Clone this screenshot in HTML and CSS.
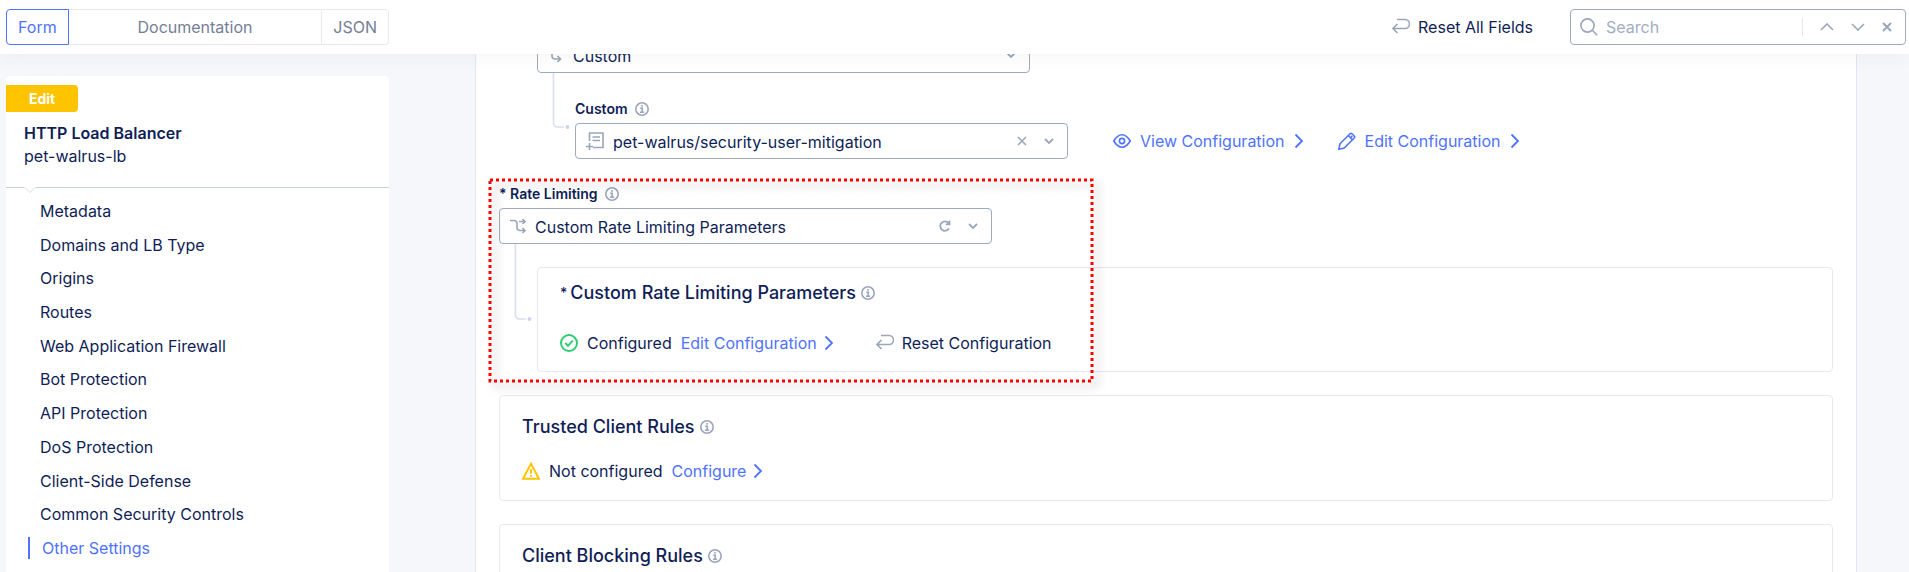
FILE: index.html
```html
<!DOCTYPE html>
<html lang="en">
<head>
<meta charset="utf-8">
<title>HTTP Load Balancer</title>
<link rel="stylesheet" href="styles.css">
</head>
<body>
<svg class="defs" aria-hidden="true">
  <symbol id="i-info" viewBox="0 0 14 14"><circle cx="7" cy="7" r="6.2"/><path d="M5.2 6.3H7.2V10M5 10.2H9.2M6.2 3.900H7.800"/></symbol>
  <symbol id="i-right" viewBox="0 0 10 16"><path d="M1.5 1.5 8 8 1.5 14.5"/></symbol>
  <symbol id="i-down" viewBox="0 0 10 6"><path d="M1 1 5 5 9 1"/></symbol>
  <symbol id="i-x" viewBox="0 0 10 10"><path d="M1 1 9 9M9 1 1 9"/></symbol>
  <symbol id="i-return" viewBox="0 0 18 18"><path d="M5 1.5H13A4.3 4.3 0 0 1 13 10.5H1.2M5.5 6 1 10.5 5.5 15"/></symbol>
</svg>

<header class="topbar">
  <div class="tabs">
    <button class="tab tab-active">Form</button>
    <button class="tab tab-wide">Documentation</button>
    <button class="tab">JSON</button>
  </div>
  <div class="tools">
    <button class="reset"><svg class="icon-18 muted"><use href="#i-return"/></svg>Reset All Fields</button>
    <div class="search">
      <svg class="icon-18 muted" viewBox="0 0 18 18"><circle cx="7.5" cy="7.5" r="6.6"/><path d="M12.3 12.3 17.2 17.2"/></svg>
      <input type="text" placeholder="Search" aria-label="Search">
      <span class="sep"></span>
      <button aria-label="Previous"><svg class="icon-arrow muted" viewBox="0 0 14 8"><path d="M1 7 7 1 13 7"/></svg></button>
      <button aria-label="Next"><svg class="icon-arrow muted" viewBox="0 0 14 8"><path d="M1 1 7 7 13 1"/></svg></button>
      <button aria-label="Clear"><svg class="icon-10 muted bold"><use href="#i-x"/></svg></button>
    </div>
  </div>
</header>

<div class="page">
  <aside class="sidebar">
    <div class="side-head">
      <span class="tag">Edit</span>
      <h1>HTTP Load Balancer</h1>
      <p>pet-walrus-lb</p>
      <svg class="notch" viewBox="0 0 12 7"><path class="notch-fill" d="M0 0 6 5.5 12 0Z"/><path class="notch-line" d="M1 .5 6 5.5 11 .5"/></svg>
    </div>
    <nav class="side-nav">
      <a href="#">Metadata</a>
      <a href="#">Domains and LB Type</a>
      <a href="#">Origins</a>
      <a href="#">Routes</a>
      <a href="#">Web Application Firewall</a>
      <a href="#">Bot Protection</a>
      <a href="#">API Protection</a>
      <a href="#">DoS Protection</a>
      <a href="#">Client-Side Defense</a>
      <a href="#">Common Security Controls</a>
      <a href="#" class="current">Other Settings</a>
    </nav>
  </aside>

  <main class="panel">
    <div class="branch indent">
      <div class="combo combo-scrolled">
        <svg class="icon-16 muted" viewBox="0 0 16 16"><path d="M4 2V9Q4 12 7 12H12M9.5 9 12.5 12 9.5 15"/></svg>
        <select aria-label="Mitigation type"><option>Custom</option></select>
        <svg class="icon-chev muted"><use href="#i-down"/></svg>
      </div>
      <div class="child">
        <svg class="elbow" viewBox="0 0 18 57"><path d="M1.5 0V50Q1.5 54 5.5 54H12"/><circle cx="15.5" cy="54" r="2"/></svg>
        <div class="label-row"><label for="mitigation">Custom</label><svg class="icon-14 muted"><use href="#i-info"/></svg></div>
        <div class="line">
          <div class="combo">
            <svg class="icon-18 muted" viewBox="0 0 18 18"><path d="M3.5 9V1H17V15.5H7M6.5 5H14M6.5 8.500H14M0 14.500H7M3.500 11V18"/></svg>
            <select id="mitigation"><option>pet-walrus/security-user-mitigation</option></select>
            <button aria-label="Clear selection"><svg class="icon-10 muted"><use href="#i-x"/></svg></button>
            <svg class="icon-chev muted"><use href="#i-down"/></svg>
          </div>
          <a href="#" class="link spaced"><svg class="icon-18" viewBox="0 0 18 18"><path d="M.8 9Q4.500 2.800 9 2.800T17.200 9Q13.500 15.200 9 15.200T.8 9Z"/><circle cx="9" cy="9" r="2.600"/></svg>View Configuration<svg class="icon-right"><use href="#i-right"/></svg></a>
          <a href="#" class="link spaced"><svg class="icon-18" viewBox="0 0 18 18"><path d="M.8 17.200 2 11.800 12 1.800Q13 .8 14 1.800L16.200 4Q17.200 5 16.200 6L6.200 16ZM10.300 3.500 14.500 7.700M12.500 5.700 14.300 3.900"/></svg>Edit Configuration<svg class="icon-right"><use href="#i-right"/></svg></a>
        </div>
      </div>
    </div>

    <section class="branch rate">
      <svg class="highlight" aria-hidden="true"><rect width="100%" height="100%"/></svg>
      <div class="label-row"><label for="rate">* Rate Limiting</label><svg class="icon-14 muted"><use href="#i-info"/></svg></div>
      <div class="combo">
        <svg class="icon-16 muted" viewBox="0 0 16 16"><path d="M0 2.500H4Q7 2.500 7 5.500V9.500Q7 12.500 10 12.500H15M9 3.500H15M12.500 1 15 3.500 12.500 6M12.500 10 15 12.500 12.500 15"/></svg>
        <select id="rate"><option>Custom Rate Limiting Parameters</option></select>
        <button aria-label="Restore default"><svg class="icon-12 muted" viewBox="0 0 12 12"><path d="M10 8.500A4.700 4.700 0 1 1 9.800 3.400M10.500 .5V4.300H6.700"/></svg></button>
        <svg class="icon-chev muted"><use href="#i-down"/></svg>
      </div>
      <div class="card card-nested">
        <svg class="elbow elbow-long" viewBox="0 0 18 78"><path d="M1.500 0V71Q1.500 75 5.500 75H12"/><circle cx="15.500" cy="75" r="2"/></svg>
        <h2><span class="star">*</span>Custom Rate Limiting Parameters<svg class="icon-14 muted"><use href="#i-info"/></svg></h2>
        <div class="status">
          <svg class="icon-18 ok" viewBox="0 0 18 18"><circle cx="9" cy="9" r="8"/><path d="M5.300 9 8 11.800 12.700 6.600"/></svg>
          <span>Configured</span>
          <a href="#" class="link">Edit Configuration<svg class="icon-right"><use href="#i-right"/></svg></a>
          <button class="reset reset-inline"><svg class="icon-18 muted"><use href="#i-return"/></svg>Reset Configuration</button>
        </div>
      </div>
    </section>

    <section class="card">
      <h2>Trusted Client Rules<svg class="icon-14 muted"><use href="#i-info"/></svg></h2>
      <div class="status">
        <svg class="icon-18 warn" viewBox="0 0 18 18"><path d="M9 1.800 17 16.700H1ZM9 7V11.500M9 13V14.800"/></svg>
        <span>Not configured</span>
        <a href="#" class="link">Configure<svg class="icon-right"><use href="#i-right"/></svg></a>
      </div>
    </section>

    <section class="card">
      <h2>Client Blocking Rules<svg class="icon-14 muted"><use href="#i-info"/></svg></h2>
    </section>
  </main>
</div>
</body>
</html>
```
FILE: styles.css
```css
* { box-sizing: border-box; }

body {
  margin: 0;
  height: 100vh;
  display: flex;
  flex-direction: column;
  overflow: hidden;
  background: #f6f7fa;
  color: #0f1e57;
  font: 16px/24px Inter, sans-serif;
}

h1, h2, p { margin: 0; }

button, input, select {
  font: inherit;
  color: inherit;
  background: none;
  border: 0;
  padding: 0;
  margin: 0;
}

a { color: inherit; text-decoration: none; }

svg {
  flex: none;
  fill: none;
  stroke: currentColor;
  stroke-width: 1.6;
}

.defs { display: none; }
.muted { color: #9ca6ba; }
.bold { stroke-width: 2; }
.icon-10 { width: 10px; height: 10px; }
.icon-12 { width: 12px; height: 12px; stroke-width: 1.8; }
.icon-14 { width: 14px; height: 14px; }
.icon-16 { width: 16px; height: 16px; }
.icon-18 { width: 18px; height: 18px; }
.icon-arrow { width: 14px; height: 8px; }
.icon-chev { width: 10px; height: 6px; stroke-width: 1.8; }
.icon-right { width: 10px; height: 16px; stroke-width: 1.8; }
.ok { color: #2ecc71; stroke-width: 2; }
.warn { color: #ffc400; stroke-width: 2; }

/* Top bar */
.topbar {
  position: relative;
  z-index: 2;
  flex: none;
  display: flex;
  justify-content: space-between;
  padding: 9px 3px 9px 6px;
  background: #fff;
  box-shadow: 0 4px 20px rgba(0, 0, 0, 0.04);
}

.tabs { display: flex; width: 383px; }

.tab {
  height: 36px;
  padding: 0 11px;
  border: 1px solid #e8eaf3;
  border-left: 0;
  color: #758096;
}

.tab:last-child { border-radius: 0 4px 4px 0; }
.tab-wide { flex: 1; }

.tab-active {
  border: 1px solid #4f73ff;
  border-radius: 4px 0 0 4px;
  color: #4f73ff;
}

.tools { display: flex; gap: 37px; }

.reset {
  display: flex;
  align-items: center;
  gap: 8px;
}

.search {
  display: flex;
  align-items: center;
  width: 336px;
  height: 36px;
  padding: 0 13px 0 9px;
  border: 1px solid #a0abc0;
  border-radius: 4px;
}

.search input {
  flex: 1;
  min-width: 0;
  margin-left: 8px;
  outline: 0;
}

.search input::placeholder { color: #a3adc2; opacity: 1; }
.search button { display: flex; margin-left: 17px; }
.sep { width: 1px; height: 18px; background: #e3e7f0; }

/* Page */
.page {
  flex: 1;
  min-height: 0;
  display: flex;
  padding: 0 52px 0 6px;
}

.sidebar {
  flex: none;
  display: flex;
  flex-direction: column;
  width: 383px;
  margin-top: 22px;
  background: #fff;
  border-radius: 4px 4px 0 0;
}

.side-head {
  position: relative;
  padding: 9px 0 19px;
  border-bottom: 1px solid #c8d0dc;
}

.tag {
  display: block;
  width: 72px;
  margin-bottom: 10px;
  background: #ffc400;
  border-radius: 0 4px 4px 0;
  color: #fff;
  font-size: 14px;
  font-weight: 700;
  line-height: 27px;
  text-align: center;
}

.side-head h1, .side-head p {
  padding-left: 18px;
  font-size: 16px;
  line-height: 23px;
}

.side-head h1 { font-weight: 600; }

.notch {
  position: absolute;
  left: 18px;
  bottom: -7px;
  width: 12px;
  height: 7px;
}

.notch-fill { fill: #fff; stroke: none; }
.notch-line { stroke: #d5dbe6; stroke-width: 1; }

.side-nav {
  flex: 1;
  display: flex;
  flex-direction: column;
  justify-content: space-between;
  gap: 8px;
  padding: 12px 0 13px 22px;
}

.side-nav a { padding-left: 12px; line-height: 22px; }

.side-nav .current {
  border-left: 2px solid #4f73ff;
  color: #4f73ff;
}

.panel {
  flex: 1;
  min-width: 0;
  margin-left: 86px;
  padding: 0 23px;
  border: 1px solid #e3e6f1;
  border-width: 0 1px;
  background: #fff;
  overflow: hidden;
}

.branch { position: relative; }
.indent { padding-left: 38px; }

.combo {
  display: flex;
  align-items: center;
  width: 493px;
  height: 36px;
  padding: 0 13px 0 10px;
  border: 1px solid #a0abc0;
  border-radius: 4px;
}

.combo-scrolled { margin-top: -17px; }

.combo select {
  flex: 1;
  min-width: 0;
  margin-left: 9px;
  padding-top: 2px;
  appearance: none;
  outline: 0;
}

.combo button { display: flex; margin-right: 17px; }

.child {
  position: relative;
  padding: 27px 0 0 38px;
}

.elbow {
  position: absolute;
  left: 15px;
  top: 0;
  width: 18px;
  height: 57px;
  color: #dadff0;
}

.elbow circle { fill: #cfd5e8; stroke: none; }

.elbow-long {
  left: -24px;
  top: -24px;
  height: 78px;
}

.label-row {
  display: flex;
  align-items: center;
  gap: 7px;
  margin-bottom: 5px;
  font-size: 14px;
  font-weight: 600;
  line-height: 18px;
}

.line { display: flex; align-items: center; }

.link {
  display: flex;
  align-items: center;
  gap: 7px;
  color: #4f73ff;
}

.spaced { gap: 9px; margin-left: 45px; }
.spaced + .spaced { margin-left: 34px; }

.rate { margin-top: 26px; }

.highlight {
  position: absolute;
  z-index: 1;
  left: -9px;
  top: -5px;
  width: 602px;
  height: 201px;
  overflow: visible;
  pointer-events: none;
  stroke: #f00;
  stroke-width: 3;
  stroke-dasharray: 3 3;
  filter: drop-shadow(5px 5px 4px rgba(0, 0, 0, 0.3));
}

/* Cards */
.card {
  position: relative;
  margin-top: 23px;
  padding: 19px 22px 17px;
  border: 1px solid #e6e9f4;
  border-radius: 4px;
}

.card-nested {
  margin-left: 38px;
  padding: 13px 22px 16px;
}

.card h2 {
  display: flex;
  align-items: center;
  gap: 5px;
  margin-bottom: 20px;
  font-size: 18px;
  font-weight: 500;
}

.card-nested h2 { margin-bottom: 26px; }
.star { margin-right: -2px; font-size: 14px; }

.status { display: flex; align-items: center; gap: 9px; }
.reset-inline { margin-left: 33px; }
```
